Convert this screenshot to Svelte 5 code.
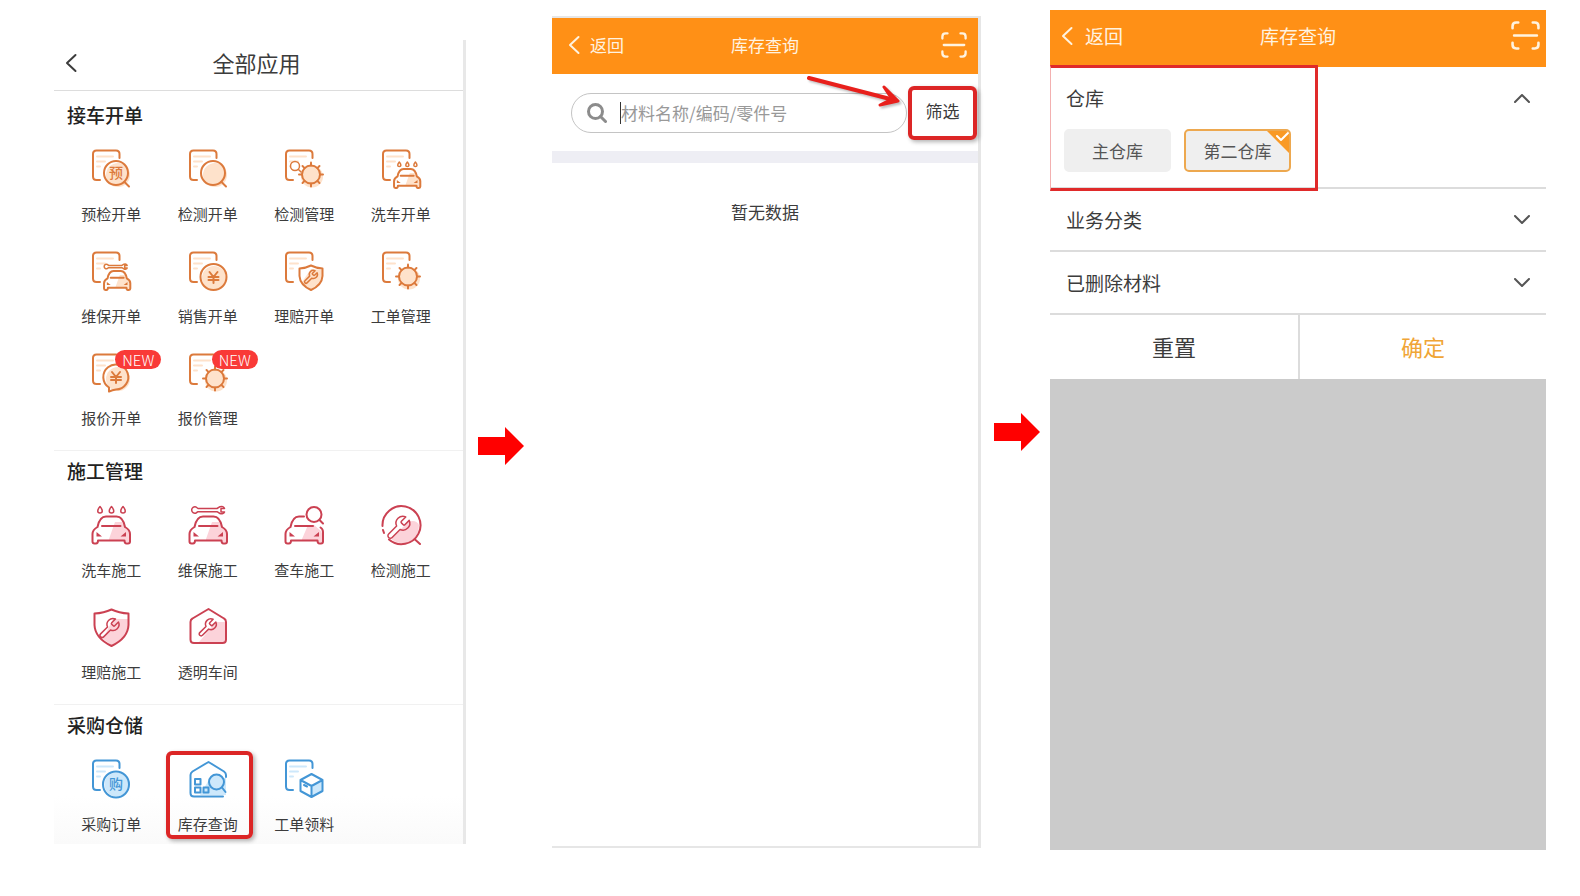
<script>
    const sections = [
        {
            title: "接车开单",
            tone: "orange",
            items: [
                { name: "预检开单", icon: "doc-check" },
                { name: "检测开单", icon: "doc-search" },
                { name: "检测管理", icon: "doc-search-gear" },
                { name: "洗车开单", icon: "doc-wash" },
                { name: "维保开单", icon: "doc-repair" },
                { name: "销售开单", icon: "doc-yen" },
                { name: "理赔开单", icon: "doc-shield" },
                { name: "工单管理", icon: "doc-gear" },
                { name: "报价开单", icon: "doc-quote", badge: true },
                { name: "报价管理", icon: "doc-gear", badge: true }
            ]
        },
        {
            title: "施工管理",
            tone: "red",
            items: [
                { name: "洗车施工", icon: "wash" },
                { name: "维保施工", icon: "repair" },
                { name: "查车施工", icon: "car-search" },
                { name: "检测施工", icon: "inspect" },
                { name: "理赔施工", icon: "shield" },
                { name: "透明车间", icon: "workshop" }
            ]
        },
        {
            title: "采购仓储",
            tone: "blue",
            items: [
                { name: "采购订单", icon: "doc-buy" },
                { name: "库存查询", icon: "stock", marked: true },
                { name: "工单领料", icon: "doc-box" }
            ]
        }
    ]

    const warehouses = ["主仓库", "第二仓库"]
    let warehouse = $state("第二仓库")
    let keyword = $state("")
    let warehouse_open = $state(true)

    function reset() {
        warehouse = ""
    }
</script>

{#snippet car()}
    <path class="fill" d="M18 34L24 17H31L34 22C38 24 39 26 39 29V37H34V35H18Z"/>
    <path d="M6.5 22C8 14.500 11 11.500 15 11.500H25.500C29.500 11.500 32.500 14.500 34 22C37.500 24 39 26 39 29V36.500Q39 38.500 37 38.500H35.500Q33.500 38.500 33.500 35.500H7Q7 38.500 5 38.500H3.500Q1.500 38.500 1.500 36.500V29C1.500 26 3 24 6.500 22Z"/>
    <path d="M11 21H29.500"/>
    <path class="solid" d="M5.500 27L11 31.500H5.500ZM35 27L29.500 31.500H35Z"/>
{/snippet}

{#snippet drops()}
    {#each [9, 20.5, 32] as x}
        <path class="thin" d="M{x} 1.500C{x - 3} 5 {x - 3} 8 {x} 8C{x + 3} 8 {x + 3} 5 {x} 1.500Z"/>
    {/each}
{/snippet}

{#snippet spanner()}
    <path class="thin" d="M6 2A3.200 3.200 0 1 0 6 8L8 6.700H27L30 8.500C32 9.300 34 8.500 34.500 7H31V3.500H34.500C34 1.500 32 1 30 1.700L27 3.500H8Z"/>
{/snippet}

{#snippet wrench()}
    <path class="thin" d="M14.7 6.3a1 1 0 0 0 0 1.4l1.600 1.600a1 1 0 0 0 1.400 0l3.770-3.770a6 6 0 0 1-7.940 7.940l-6.910 6.910a2.120 2.120 0 0 1-3-3l6.910-6.910a6 6 0 0 1 7.940-7.940l-3.760 3.760z"/>
{/snippet}

{#snippet gear(r)}
    <circle class="fill" cx="28" cy="27.500" r={r + 2}/>
    <circle cx="27" cy="25.500" {r}/>
    {#each [0, 45, 90, 135, 180, 225, 270, 315] as a}
        <path d="M27 {25.5 - r}V{22.5 - r}" transform="rotate({a} 27 25.5)"/>
    {/each}
{/snippet}

{#snippet yen(x, y)}
    <path d="M{x - 4} {y - 5}L{x} {y}L{x + 4} {y - 5}M{x} {y}V{y + 6}M{x - 5} {y}H{x + 5}M{x - 5} {y + 3}H{x + 5}"/>
{/snippet}

{#snippet app_icon(icon)}
    <svg class="icon" viewBox="0 0 40 40" aria-hidden="true">
        {#if icon.startsWith("doc")}
            <path class="pale" d="M6 7.500H22M6 12.500H14M6 17.500H9"/>
            <path class="sheet" d="M28.500 9V5Q28.500 1.500 25 1.500H5.500Q2 1.500 2 5V27.500Q2 31 5.500 31H9"/>
        {/if}
        {#if icon === "doc-check" || icon === "doc-search"}
            <circle class="fill" cx="27" cy="26" r="12"/>
            <circle cx="25" cy="24" r="12"/>
            <path d="M33.500 33L38 37.500"/>
            {#if icon === "doc-check"}
                <text x="25" y="29">预</text>
            {/if}
        {:else if icon === "doc-search-gear"}
            <circle class="clear thin" cx="11" cy="17" r="4.500"/>
            <path class="thin" d="M14.500 20.500L17 23"/>
            {@render gear(9)}
        {:else if icon === "doc-wash"}
            <g transform="translate(12 12) scale(0.7)">
                {@render drops()}
                {@render car()}
            </g>
        {:else if icon === "doc-repair"}
            <g transform="translate(12 12) scale(0.7)">
                {@render spanner()}
                {@render car()}
            </g>
        {:else if icon === "doc-yen"}
            <circle class="fill" cx="26" cy="27" r="12"/>
            <circle cx="25.500" cy="26" r="13"/>
            {@render yen(25.5, 26)}
        {:else if icon === "doc-shield"}
            <path class="fill" d="M27 18L38 19V28Q36 37 27 39Q20 36 18 31Z"/>
            <path d="M27 14.500Q32 17 38.500 17.500V25Q38 34 27 39Q16 34 15.500 25V17.500Q22 17 27 14.500Z"/>
            <g transform="translate(18.500 18) scale(0.680)">{@render wrench()}</g>
        {:else if icon === "doc-gear"}
            {@render gear(9)}
        {:else if icon === "doc-quote"}
            <circle class="fill" cx="27" cy="26" r="12"/>
            <path d="M18 38.500V34.500A12.500 12.500 0 1 1 25 36.500Q21.500 37 18 38.500Z"/>
            {@render yen(25, 24)}
        {:else if icon === "doc-buy"}
            <circle class="fill" cx="25.500" cy="25.500" r="12"/>
            <circle cx="25" cy="25.500" r="13"/>
            <text x="25" y="30">购</text>
        {:else if icon === "doc-box"}
            <path class="fill" d="M27.500 27L38.500 21V32L27.500 38Z"/>
            <path d="M27.500 15L38.500 21V32L27.500 38L16.500 32V21ZM16.500 21L27.500 27L38.500 21M27.500 27V38M20 26L23 27.500"/>
        {:else if icon === "wash"}
            {@render drops()}
            {@render car()}
        {:else if icon === "repair"}
            <g transform="translate(2)">{@render spanner()}</g>
            {@render car()}
        {:else if icon === "car-search"}
            <path class="fill" d="M18 34L24 20H30L37 26L39 30V37H34V35H18Z"/>
            <path d="M20 11.500H15C11 11.500 8 14.500 6.500 22C3 24 1.500 26 1.500 29V36.500Q1.500 38.500 3.500 38.500H5Q7 38.500 7 35.500H33.500Q33.500 38.500 35.500 38.500H37Q39 38.500 39 36.500V27Q39 24 36.500 22.500"/>
            <path d="M11 21H29"/>
            <path class="solid" d="M5.500 27L11 31.500H5.500ZM35 27L29.500 31.500H35Z"/>
            <circle class="clear" cx="30" cy="9.500" r="7.500"/>
            <path d="M35.500 15L39 18.500"/>
        {:else if icon === "inspect"}
            <path class="fill" d="M10 34L27 17Q35 14 38 20Q37 37 22 38.500Q15 38 10 34Z"/>
            <path d="M1.500 21A19 19 0 1 1 8 34.500M2 25L3 28M34 34.500L39 39"/>
            <g transform="translate(3.500 9) scale(1.150)">{@render wrench()}</g>
        {:else if icon === "shield"}
            <path class="fill" d="M22 12H37V21Q36 34 21 38.500L12 32Z"/>
            <path d="M20.500 2.500Q28 6 37.500 6.500V18Q37 31 20.500 39Q4 31 3.500 18V6.500Q13 6 20.500 2.500Z"/>
            <g transform="translate(6 9.500)">{@render wrench()}</g>
        {:else if icon === "workshop"}
            <path class="fill" d="M28 15H38V35H11Z"/>
            <path d="M20.500 2L36 11.500Q38 12.500 38 15V32.500Q38 36 34.500 36H6Q2.500 36 2.500 32.500V15Q2.500 12.500 4.500 11.500Z"/>
            <g transform="translate(8.500 10) scale(0.900)">{@render wrench()}</g>
        {:else if icon === "stock"}
            <path class="fill" d="M22 19H38V36H12Z"/>
            <path d="M35 37.500H6Q2.500 37.500 2.500 34V16Q2.500 14 4.500 12.500L20.500 3L36 12.500Q38 14 38 16V18"/>
            <path d="M7 20H12.500V25.500H7ZM7 28.500H12.500V33.500H7ZM15.500 28.500H20.500V33.500H15.500Z"/>
            <circle class="clear" cx="28.500" cy="23" r="7.500"/>
            <path d="M34 28.500L37.500 33"/>
        {/if}
    </svg>
{/snippet}

{#snippet back_chevron()}
    <svg class="back-chevron" viewBox="0 0 12 20" aria-hidden="true"><path d="M10.500 2L2 10L10.500 18"/></svg>
{/snippet}

{#snippet scan()}
    <svg viewBox="0 0 28 28" aria-hidden="true">
        <path d="M1.500 7V5Q1.500 1.500 5 1.500H7M21 1.500H23Q26.500 1.500 26.500 5V7M26.500 21V23Q26.500 26.500 23 26.500H21M7 26.500H5Q1.500 26.500 1.500 23V21M3 14H25"/>
    </svg>
{/snippet}

{#snippet step_arrow()}
    <svg viewBox="0 0 46 38" aria-hidden="true"><path d="M0 10H27V0L46 19L27 38V28H0Z"/></svg>
{/snippet}

<main class="flow">
    <section class="phone apps">
        <header class="apps-header">
            <button class="apps-back" aria-label="返回">{@render back_chevron()}</button>
            <h1>全部应用</h1>
        </header>
        {#each sections as section}
            <div class="group {section.tone}">
                <h2>{section.title}</h2>
                <div class="grid">
                    {#each section.items as item}
                        <button class="app" class:marked={item.marked}>
                            <span class="picture">
                                {@render app_icon(item.icon)}
                                {#if item.badge}
                                    <span class="badge">NEW</span>
                                {/if}
                            </span>
                            <span class="name">{item.name}</span>
                        </button>
                    {/each}
                </div>
            </div>
        {/each}
    </section>

    <div class="step first">{@render step_arrow()}</div>

    <section class="phone query">
        <header class="bar">
            <button class="back">{@render back_chevron()}返回</button>
            <h1>库存查询</h1>
            <button class="scan" aria-label="扫码">{@render scan()}</button>
        </header>
        <div class="search-row">
            <div class="search">
                <svg viewBox="0 0 20 20" aria-hidden="true"><circle cx="8.500" cy="8.500" r="7"/><path d="M13.500 13.500L18.500 18.500"/></svg>
                <span class="caret"></span>
                <input type="text" aria-label="搜索材料" placeholder="材料名称/编码/零件号" bind:value={keyword}>
            </div>
            <button class="filter">筛选</button>
            <svg class="pointer" viewBox="0 0 96 36" aria-hidden="true">
                <path d="M3 4L88 26"/>
                <path class="head" d="M78 13L92 27L74 31L86 25Z"/>
            </svg>
        </div>
        <p class="empty">暂无数据</p>
    </section>

    <div class="step second">{@render step_arrow()}</div>

    <section class="phone filters">
        <header class="bar">
            <button class="back">{@render back_chevron()}返回</button>
            <h1>库存查询</h1>
            <button class="scan" aria-label="扫码">{@render scan()}</button>
        </header>
        <div class="warehouse">
            <button class="fold" aria-expanded={warehouse_open} onclick={() => warehouse_open = !warehouse_open}>
                仓库
                <svg class:up={warehouse_open} viewBox="0 0 16 9" aria-hidden="true"><path d="M1 1L8 8L15 1"/></svg>
            </button>
            {#if warehouse_open}
                <div class="choices">
                    {#each warehouses as name}
                        <button class="choice" class:selected={warehouse === name} aria-pressed={warehouse === name}
                                onclick={() => warehouse = name}>
                            {name}
                            {#if warehouse === name}
                                <svg viewBox="0 0 24 24" aria-hidden="true">
                                    <path class="corner" d="M0 0H24V24Z"/>
                                    <path class="tick" d="M11 6L15 10L22 3"/>
                                </svg>
                            {/if}
                        </button>
                    {/each}
                </div>
            {/if}
            <div class="frame"></div>
        </div>
        {#each ["业务分类", "已删除材料"] as name}
            <button class="fold row" aria-expanded="false">
                {name}
                <svg viewBox="0 0 16 9" aria-hidden="true"><path d="M1 1L8 8L15 1"/></svg>
            </button>
        {/each}
        <div class="actions">
            <button onclick={reset}>重置</button>
            <button class="confirm">确定</button>
        </div>
    </section>
</main>

<style>
    :global(body) {
        margin: 0;
        background: #fff;
    }

    .flow {
        display: grid;
        grid-template-columns: 412fr 86fr 429fr 69fr 496fr;
        box-sizing: border-box;
        min-height: 100vh;
        padding: 10px 34px 46px 54px;
        font-family: "Noto Sans CJK SC", "Noto Sans", sans-serif;
        color: #3c3c3c;
    }

    button {
        border: 0;
        padding: 0;
        background: none;
        font: inherit;
        color: inherit;
        cursor: pointer;
    }

    svg {
        display: block;
        fill: none;
        stroke-linecap: round;
        stroke-linejoin: round;
    }

    h1, h2, p {
        margin: 0;
        font-weight: 400;
    }

    .phone {
        min-width: 0;
    }

    .back-chevron {
        width: 12px;
        height: 20px;
        stroke: currentColor;
        stroke-width: 2;
    }

    /* all apps */
    .apps {
        align-self: start;
        margin-top: 30px;
        border-right: 3px solid #e8e8e8;
        background: linear-gradient(#fff 94%, #fafafa);
    }

    .apps-header {
        display: grid;
        grid-template-columns: 1fr auto 1fr;
        align-items: center;
        height: 51px;
        padding: 0 15px 4px 11px;
        box-sizing: border-box;
        border-bottom: 1px solid #ddd;
    }

    .apps-header h1 {
        font-size: 22px;
        line-height: 30px;
        padding-bottom: 2px;
    }

    .apps-back {
        justify-self: start;
    }

    .group {
        padding: 5px 14px 22px 9px;
        border-top: 1px solid #f1f1f1;
    }

    .apps-header + .group {
        padding-top: 8px;
        border-top-color: transparent;
    }

    .group:last-child {
        padding-bottom: 10px;
    }

    .group h2 {
        padding-left: 4px;
        font-size: 19px;
        line-height: 30px;
        font-weight: 500;
        color: #222;
    }

    .grid {
        display: grid;
        grid-template-columns: repeat(4, 1fr);
        row-gap: 27px;
        margin-top: 19px;
    }

    .app {
        position: relative;
        display: flex;
        flex-direction: column;
        align-items: center;
        gap: 15px;
        font-size: 15px;
        line-height: 20px;
        white-space: nowrap;
    }

    .app.marked::after {
        content: "";
        position: absolute;
        inset: -8px 3px -5px 6px;
        border: 4px solid #dc2626;
        border-radius: 6px;
        box-shadow: 2px 2px 4px rgba(0, 0, 0, 0.3);
    }

    .picture {
        position: relative;
    }

    .badge {
        position: absolute;
        left: 24px;
        top: -3px;
        width: 46px;
        height: 19px;
        border-radius: 10px;
        background: #f93a37;
        color: #fff;
        font-size: 15px;
        font-weight: 300;
        line-height: 19px;
    }

    .icon {
        width: 40px;
        height: 40px;
        overflow: visible;
        stroke: var(--line);
        stroke-width: 2;
    }

    .icon :global(*) {
        vector-effect: non-scaling-stroke;
    }

    .icon .thin {
        stroke-width: 1.5;
    }

    .icon .fill {
        fill: var(--tint);
        stroke: none;
    }

    .icon .solid {
        fill: var(--line);
        stroke: none;
    }

    .icon .clear {
        fill: var(--lens);
    }

    .icon .pale {
        stroke: var(--tint);
    }

    .icon text {
        fill: var(--line);
        stroke: none;
        font-size: 14px;
        font-weight: 500;
        text-anchor: middle;
    }

    .orange {
        --line: #dc7a3c;
        --tint: #fee2cb;
        --lens: #fff;
    }

    .red {
        --line: #cb4152;
        --tint: #fcd3da;
        --lens: #fff;
    }

    .blue {
        --line: #4396d6;
        --tint: #cde8fb;
        --lens: #cde8fb;
    }

    /* arrows between the screens */
    .step svg {
        width: 46px;
        height: 38px;
        fill: #f00;
    }

    .first {
        margin: 417px 0 0 12px;
    }

    .second {
        margin: 403px 0 0 13px;
    }

    /* stock query */
    .query {
        margin: 6px 0 2px;
        border: solid #e6e6e6;
        border-width: 2px 3px 2px 0;
    }

    .bar {
        display: grid;
        grid-template-columns: 1fr auto 1fr;
        align-items: center;
        height: 56px;
        box-sizing: border-box;
        padding: 0 11px 2px 16px;
        background: #ff9016;
        color: #fff3e0;
    }

    .bar h1 {
        font-size: 17px;
        line-height: 24px;
        padding-right: 5px;
    }

    .back {
        display: flex;
        align-items: center;
        gap: 10px;
        font-size: 17px;
        line-height: 24px;
    }

    .scan {
        justify-self: end;
    }

    .scan svg {
        width: 26px;
        height: 26px;
        stroke: currentColor;
        stroke-width: 2.5;
    }

    .search-row {
        position: relative;
        display: flex;
        align-items: center;
        gap: 1px;
        height: 77px;
        padding: 0 1px 0 19px;
        border-bottom: 12px solid #eeeef4;
    }

    .search {
        display: flex;
        align-items: center;
        flex: 1;
        min-width: 0;
        height: 40px;
        box-sizing: border-box;
        padding: 0 15px;
        border: 1px solid #c4c4c4;
        border-radius: 20px;
    }

    .search svg {
        flex: none;
        width: 20px;
        height: 20px;
        stroke: #8c8c8c;
        stroke-width: 3;
    }

    .caret {
        width: 1px;
        height: 22px;
        margin-left: 13px;
        background: #333;
    }

    .search input {
        flex: 1;
        min-width: 0;
        padding: 0;
        border: 0;
        outline: 0;
        background: none;
        font: inherit;
        font-size: 17px;
        line-height: 24px;
    }

    .search input::placeholder {
        color: #999;
        opacity: 1;
    }

    .filter {
        width: 69px;
        height: 54px;
        box-sizing: border-box;
        padding-bottom: 4px;
        border: 4px solid #dc2626;
        border-radius: 6px;
        box-shadow: 2px 2px 4px rgba(0, 0, 0, 0.3);
        font-size: 17px;
        line-height: 24px;
    }

    .pointer {
        position: absolute;
        top: 0;
        right: 76px;
        width: 96px;
        height: 36px;
        stroke: #e8201c;
        stroke-width: 4;
        filter: drop-shadow(2px 2px 1px rgba(0, 0, 0, 0.25));
    }

    .head {
        fill: #e8201c;
        stroke-width: 3;
    }

    .empty {
        padding-top: 37px;
        text-align: center;
        font-size: 17px;
        line-height: 24px;
    }

    /* filter drawer */
    .filters {
        background: #cbcbcb;
        font-size: 19px;
        line-height: 24px;
    }

    .filters .bar {
        height: 57px;
        padding: 0 6px 6px 11px;
    }

    .filters .bar h1, .filters .back {
        font-size: 19px;
    }

    .filters .back {
        gap: 12px;
    }

    .filters .scan svg {
        width: 29px;
        height: 29px;
    }

    .warehouse {
        position: relative;
        padding: 19px 0 15px;
        border-bottom: 2px solid #dcdcdc;
        background: #fff;
    }

    .frame {
        position: absolute;
        top: -2px;
        left: 0;
        bottom: -4px;
        width: 54%;
        box-sizing: border-box;
        border: 3px solid #e02a2a;
        border-left: 1px solid #f3b0b0;
        pointer-events: none;
    }

    .fold {
        display: flex;
        justify-content: space-between;
        align-items: center;
        width: 100%;
        box-sizing: border-box;
        padding: 0 16px;
        background: #fff;
    }

    .fold svg {
        width: 16px;
        height: 9px;
        stroke: #555;
        stroke-width: 2;
    }

    .fold svg.up {
        transform: rotate(180deg);
    }

    .fold.row {
        height: 63px;
        border-bottom: 2px solid #dcdcdc;
    }

    .choices {
        display: flex;
        gap: 13px;
        margin-top: 19px;
        padding: 0 14px;
    }

    .choice {
        position: relative;
        width: 107px;
        height: 43px;
        box-sizing: border-box;
        border: 2px solid #efefef;
        border-radius: 5px;
        background: #efefef;
        font-size: 17px;
        color: #555;
        overflow: hidden;
    }

    .choice.selected {
        border-color: #eda84f;
    }

    .choice svg {
        position: absolute;
        top: -1px;
        right: -1px;
        width: 24px;
        height: 24px;
    }

    .corner {
        fill: #f99a26;
    }

    .tick {
        stroke: #fff;
        stroke-width: 2;
    }

    .actions {
        display: grid;
        grid-template-columns: 1fr 1fr;
        height: 64px;
        background: #fff;
        font-size: 22px;
    }

    .actions button {
        padding-bottom: 3px;
    }

    .confirm {
        border-left: 2px solid #dcdcdc;
        color: #f0a536;
    }
</style>
